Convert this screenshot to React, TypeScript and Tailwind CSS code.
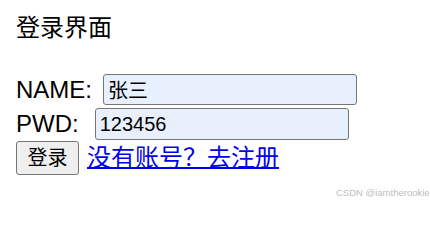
import React from "react";

export default function App() {
  const font = { fontFamily: '"Liberation Sans", "Noto Sans CJK SC", sans-serif' };
  return (
    <div
      className="relative w-[430px] h-[205px] overflow-hidden bg-white pl-4 pt-[14px] text-black font-['Liberation_Sans','Noto_Sans_CJK_SC',sans-serif]"
    >
      <div className="text-[24px] leading-[28px]">登录界面</div>
      <div className="mt-[30px] flex h-[35px] items-center">
        <span className="text-[24px]">NAME:</span>
        <input
          readOnly
          value="张三"
          style={font}
          className="ml-[11px] h-[31px] w-[254px] rounded-[3px] border-[1.5px] border-[#767676] bg-[#e8f0fe] px-[4px] text-[20px] text-black outline-none"
        />
      </div>
      <div className="flex h-[34px] items-center">
        <span className="text-[24px]">PWD:</span>
        <input
          readOnly
          value="123456"
          style={font}
          className="ml-[16px] h-[31.5px] w-[254px] rounded-[3px] border-[1.5px] border-[#767676] bg-[#e8f0fe] px-[4px] text-[20px] text-black outline-none"
        />
      </div>
      <div className="flex h-[34px] items-center">
        <button
          type="button"
          className="flex h-[34px] w-[63px] items-center justify-center rounded-[3px] border-[1.5px] border-[#767676] bg-[#efefef] text-[20px] text-black"
        >
          登录
        </button>
        <a href="#" className="ml-[8px] text-[24px] text-[#0000ee] underline decoration-[1.5px] underline-offset-[1px]">
          没有账号？去注册
        </a>
      </div>
      <div className="absolute left-[336px] top-[188px] whitespace-nowrap text-[9.5px] leading-[10px] text-[#bdbdbd]">
        CSDN @iamtherookie
      </div>
    </div>
  );
}
